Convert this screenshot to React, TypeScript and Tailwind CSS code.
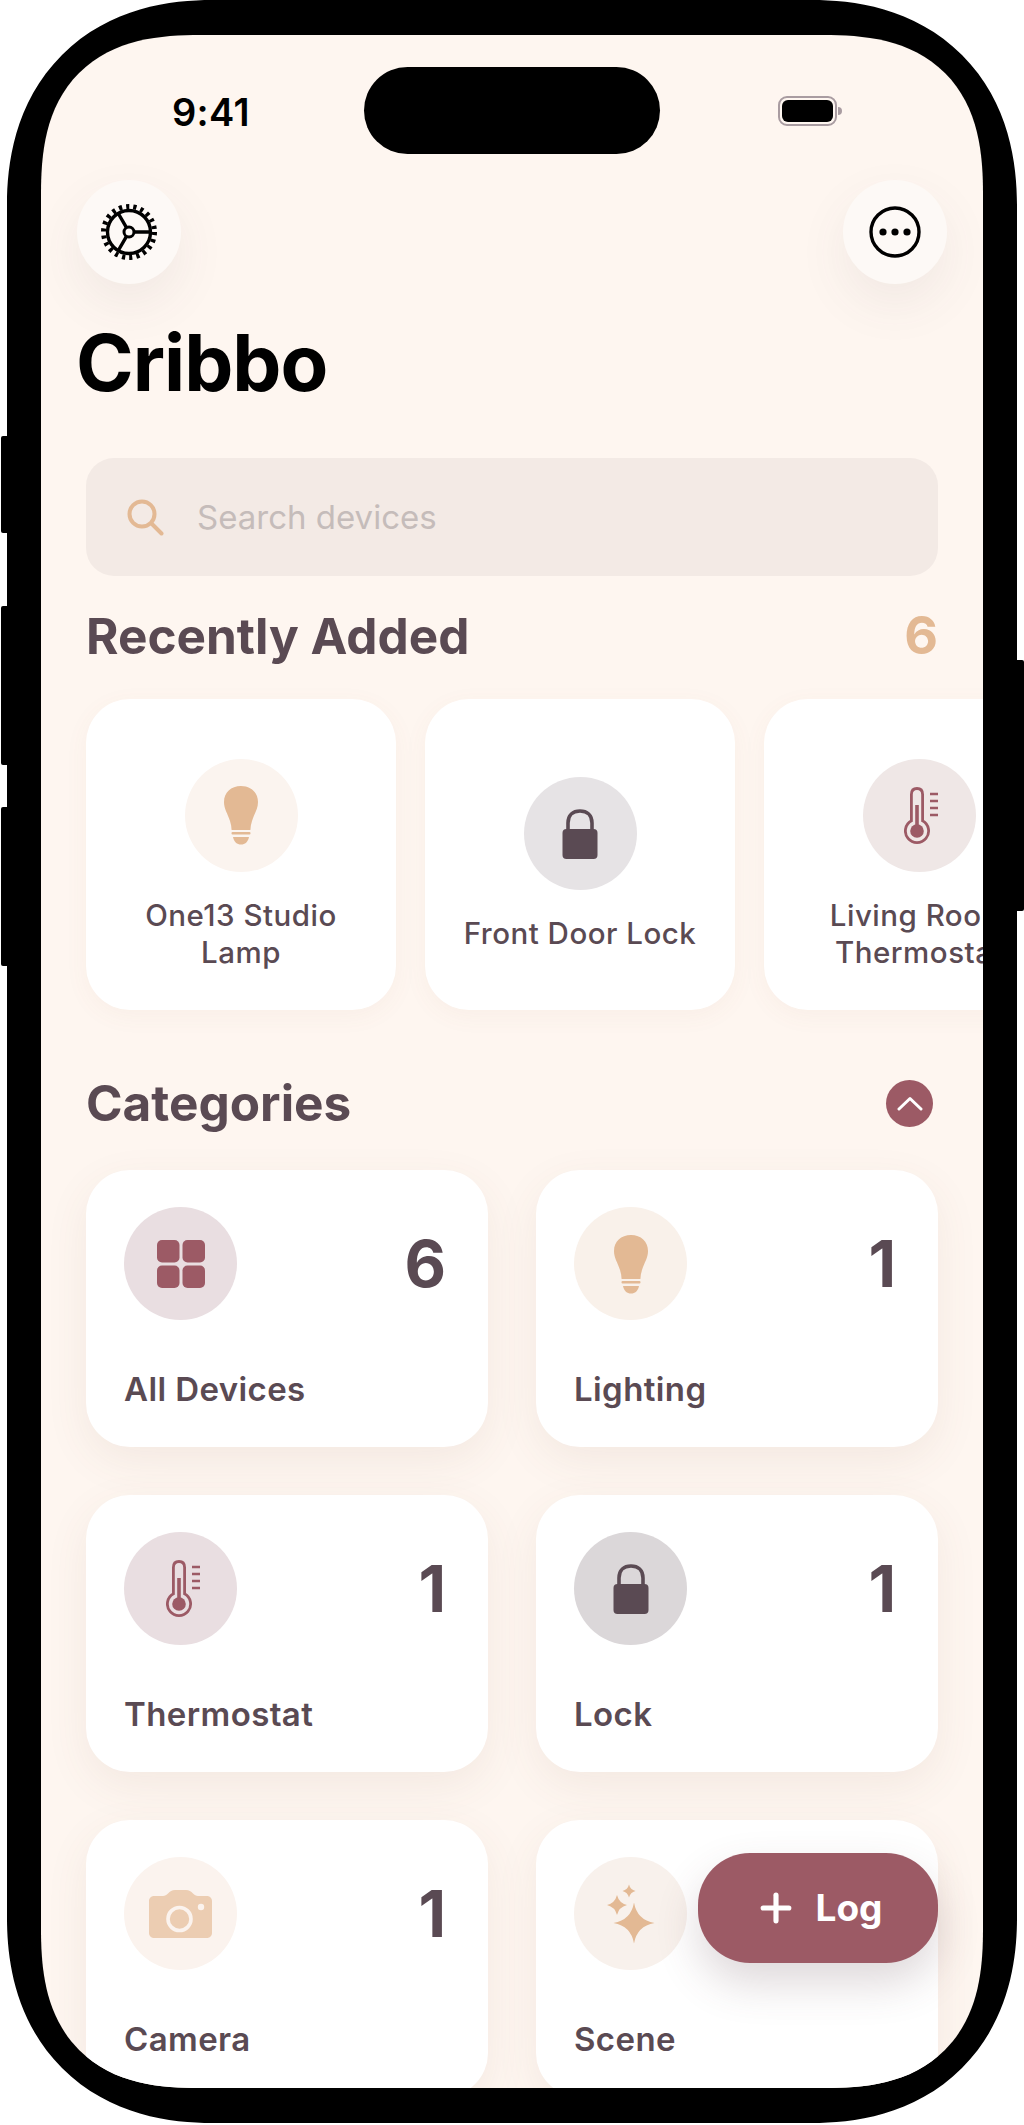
import type { ReactNode } from "react";
import { Plus } from "lucide-react";

const plum = "#5a4a53";
const rose = "#9c5a65";
const sand = "#e3b994";

function GearIcon() {
  return (
    <svg viewBox="0 0 60 60" className="h-[60px] w-[60px]" fill="none" stroke="#000">
      <circle cx="30" cy="30" r="25.500" strokeWidth="5" strokeDasharray="3.200 4.080" />
      <circle cx="30" cy="30" r="21.500" strokeWidth="3.400" />
      <path d="M35 30H52M27.500 25.700L19 11M27.500 34.300L19 49" strokeWidth="3.400" />
      <circle cx="30" cy="30" r="5" strokeWidth="3" />
    </svg>
  );
}

function MoreIcon() {
  return (
    <svg viewBox="0 0 56 56" className="h-[56px] w-[56px]" fill="none">
      <circle cx="28" cy="28" r="24" stroke="#000" strokeWidth="3.400" />
      <circle cx="16" cy="28" r="3.600" fill="#000" />
      <circle cx="28" cy="28" r="3.600" fill="#000" />
      <circle cx="40" cy="28" r="3.600" fill="#000" />
    </svg>
  );
}

function SearchIcon() {
  return (
    <svg viewBox="0 0 37 37" className="h-[37px] w-[37px]" fill="none" stroke={sand} strokeWidth="4" strokeLinecap="round">
      <circle cx="15" cy="15" r="12.500" />
      <path d="M25 25L34.500 34.500" />
    </svg>
  );
}

function BulbIcon() {
  return (
    <svg viewBox="0 0 36 60" className="h-[60px] w-[36px]" fill={sand}>
      <path d="M18 1C8 1 1 7.500 1 17C1 24 4.500 28 7 36C8 39 8.500 42 8.600 45H27.400C27.500 42 28 39 29 36C31.500 28 35 24 35 17C35 7.500 28 1 18 1Z" />
      <rect x="8.500" y="47" width="19" height="2.600" rx="1" />
      <path d="M10 52H26C25 57 22 59.500 18 59.500C14 59.500 11 57 10 52Z" />
    </svg>
  );
}

function LockIcon() {
  return (
    <svg viewBox="0 0 36 50" className="h-[50px] w-[36px]">
      <path d="M6 24V14C6 6 11 2 18 2C25 2 30 6 30 14V24" fill="none" stroke={plum} strokeWidth="3.600" />
      <rect x="0.500" y="20" width="35" height="30" rx="4" fill={plum} />
    </svg>
  );
}

function ThermometerIcon() {
  return (
    <svg viewBox="0 0 34 57" className="ml-[4px] h-[57px] w-[34px]" fill="none" stroke={rose}>
      <path d="M7.400 33.800V7.500C7.400 3.500 9.500 1.500 13 1.500C16.500 1.500 18.600 3.500 18.600 7.500V33.800A11.600 11.600 0 1 1 7.400 33.800Z" strokeWidth="2.800" />
      <path d="M13 18V42" strokeWidth="3.600" />
      <circle cx="13" cy="44" r="6.800" fill={rose} stroke="none" />
      <path d="M26 7H34M26 14H34M26 21H34M26 28H34" strokeWidth="2.400" />
    </svg>
  );
}

function GridIcon() {
  return (
    <svg viewBox="0 0 48 48" className="h-[48px] w-[48px]" fill={rose}>
      <rect x="0" y="0" width="22.500" height="22.500" rx="5" />
      <rect x="25.500" y="0" width="22.500" height="22.500" rx="5" />
      <rect x="0" y="25.500" width="22.500" height="22.500" rx="5" />
      <rect x="25.500" y="25.500" width="22.500" height="22.500" rx="5" />
    </svg>
  );
}

function CameraIcon() {
  return (
    <svg viewBox="0 0 63 48" className="h-[48px] w-[63px]">
      <path d="M5 6H14C16 6 17.500 5 19 3.500C21 1.500 23 0 26 0H37C40 0 42 1.500 44 3.500C45.500 5 47 6 49 6H58C60.800 6 63 8.200 63 11V43C63 45.800 60.800 48 58 48H5C2.200 48 0 45.800 0 43V11C0 8.200 2.200 6 5 6Z" fill="#eccdb2" />
      <circle cx="30.500" cy="29" r="11.500" fill="none" stroke="#fbf3ee" strokeWidth="3.600" />
      <circle cx="52" cy="17" r="3.200" fill="#fbf3ee" />
    </svg>
  );
}

function SparkleIcon() {
  return (
    <svg viewBox="0 0 48 60" className="h-[60px] w-[48px]" fill={sand}>
      <path d="M22 0.500Q23.300 5.700 28.500 7Q23.300 8.300 22 13.500Q20.700 8.300 15.500 7Q20.700 5.700 22 0.500Z" />
      <path d="M10 11Q12 19 20 21Q12 23 10 31Q8 23 0 21Q8 19 10 11Z" />
      <path d="M27 18.500Q30 36 47.500 39Q30 42 27 59.500Q24 42 6.500 39Q24 36 27 18.500Z" />
    </svg>
  );
}

function IconDisc({ className, children }: { className: string; children: ReactNode }) {
  return <div className={`flex h-[113px] w-[113px] shrink-0 items-center justify-center rounded-full ${className}`}>{children}</div>;
}

const recent = [
  { name: "One13 Studio Lamp", disc: "bg-[#fbf4ef]", icon: <BulbIcon /> },
  { name: "Front Door Lock", disc: "bg-[#e6e3e5]", icon: <LockIcon /> },
  { name: "Living Room Thermostat", disc: "bg-[#efe7e6]", icon: <ThermometerIcon /> },
];

const categories = [
  { name: "All Devices", count: 6, disc: "bg-[#e9dee1]", icon: <GridIcon /> },
  { name: "Lighting", count: 1, disc: "bg-[#f9f1ea]", icon: <BulbIcon /> },
  { name: "Thermostat", count: 1, disc: "bg-[#e9dee1]", icon: <ThermometerIcon /> },
  { name: "Lock", count: 1, disc: "bg-[#dbd7d9]", icon: <LockIcon /> },
  { name: "Camera", count: 1, disc: "bg-[#fbf3ee]", icon: <CameraIcon /> },
  { name: "Scene", count: 1, disc: "bg-[#f8f1ec]", icon: <SparkleIcon /> },
];

export default function App() {
  return (
    <div className="relative h-[2125px] w-[1024px] overflow-hidden bg-white font-['Inter',sans-serif]">
      <div className="absolute left-[1px] top-[436px] h-[97px] w-[8px] rounded-l-[2px] bg-black" />
      <div className="absolute left-[1px] top-[606px] h-[159px] w-[8px] rounded-l-[2px] bg-black" />
      <div className="absolute left-[1px] top-[807px] h-[159px] w-[8px] rounded-l-[2px] bg-black" />
      <div className="absolute right-[0px] top-[660px] h-[251px] w-[8px] rounded-r-[2px] bg-black" />

      <div className="relative ml-[7px] h-[2123px] w-[1010px] rounded-[205px] bg-black pb-[35px] pl-[34px] pr-[34px] pt-[35px] [corner-shape:superellipse(1.15)]">
        <div className="relative h-full w-full overflow-hidden rounded-[160px] bg-[#fef6f0] [corner-shape:superellipse(1.35)]">
          <div className="absolute left-[323px] top-[32px] h-[87px] w-[296px] rounded-full bg-black" />

          <div className="flex h-[145px] items-start justify-between pl-[131px] pr-[141px] pt-[57px]">
            <span className="text-[38px] font-semibold leading-[40px] tracking-[0.3px] text-black">9:41</span>
            <div className="mt-[4px] flex items-center gap-[1px]">
              <div className="flex h-[30px] w-[59px] items-center justify-center rounded-[9px] border-2 border-[#a99ca1]">
                <div className="h-[22px] w-[51px] rounded-[6px] bg-black" />
              </div>
              <div className="h-[8px] w-[4px] rounded-r-full bg-[#a99ca1]" />
            </div>
          </div>

          <div className="flex justify-between pl-[36px] pr-[36px]">
            <button className="flex h-[104px] w-[104px] items-center justify-center rounded-full bg-[#fdf9f6] shadow-[0_20px_50px_rgba(90,74,83,0.08)]">
              <GearIcon />
            </button>
            <button className="flex h-[104px] w-[104px] items-center justify-center rounded-full bg-[#fdf9f6] shadow-[0_20px_50px_rgba(90,74,83,0.08)]">
              <MoreIcon />
            </button>
          </div>

          <h1 className="ml-[35px] mt-[33px] text-[78px] font-bold leading-[92px] tracking-[-1px] text-black">Cribbo</h1>

          <div className="mx-[45px] mt-[49px] flex h-[118px] items-center gap-[33px] rounded-[28px] bg-[#f3eae5] pl-[41px]">
            <SearchIcon />
            <span className="mt-[2px] text-[33px] text-[#c5bcba]">Search devices</span>
          </div>

          <div className="mx-[45px] mt-[32px] flex items-center justify-between">
            <h2 className="text-[49.500px] font-bold leading-[56px]" style={{ color: plum }}>Recently Added</h2>
            <span className="text-[52px] font-bold leading-[56px] text-[#e3b994]">6</span>
          </div>

          <div className="ml-[45px] mt-[35px] flex gap-[29px]">
            {recent.map((d) => (
              <div key={d.name} className="flex h-[311px] w-[310px] shrink-0 flex-col items-center justify-center rounded-[44px] bg-white pt-[20px] shadow-[0_6px_24px_rgba(150,100,80,0.05)]">
                <IconDisc className={d.disc}>{d.icon}</IconDisc>
                <p className="mt-[25px] w-[250px] text-center text-[29.500px] font-medium leading-[37px] tracking-[0.5px]" style={{ color: plum }}>{d.name}</p>
              </div>
            ))}
          </div>

          <div className="mx-[45px] mt-[65px] flex items-center justify-between">
            <h2 className="text-[49.500px] font-bold leading-[56px]" style={{ color: plum }}>Categories</h2>
            <div className="mr-[5px] flex h-[47px] w-[47px] items-center justify-center rounded-full bg-[#9c5a65]">
              <svg viewBox="0 0 26 15" className="h-[15px] w-[26px]" fill="none" stroke="#fff" strokeWidth="3" strokeLinecap="round" strokeLinejoin="round">
                <path d="M2 13L13 2.500L24 13" />
              </svg>
            </div>
          </div>

          <div className="mx-[45px] mt-[39px] grid grid-cols-2 gap-x-[48px] gap-y-[48px]">
            {categories.map((c) => (
              <div key={c.name} className="h-[277px] rounded-[44px] bg-white pl-[38px] pr-[42px] pt-[37px] shadow-[0_14px_44px_rgba(120,80,70,0.08)]">
                <div className="flex items-center justify-between">
                  <IconDisc className={c.disc}>{c.icon}</IconDisc>
                  <span className="text-[64px] font-bold leading-[72px]" style={{ color: plum }}>{c.count}</span>
                </div>
                <p className="mt-[49px] text-[33px] font-semibold leading-[40px] tracking-[0.4px]" style={{ color: plum }}>{c.name}</p>
              </div>
            ))}
          </div>

          <button className="absolute left-[657px] top-[1818px] flex h-[110px] w-[240px] items-center justify-center gap-[18px] rounded-[52px] bg-[#9c5a65] text-white shadow-[0_20px_44px_rgba(90,60,70,0.2)]">
            <Plus size={44} strokeWidth={2.800} />
            <span className="text-[37px] font-bold">Log</span>
          </button>
        </div>
      </div>
    </div>
  );
}
